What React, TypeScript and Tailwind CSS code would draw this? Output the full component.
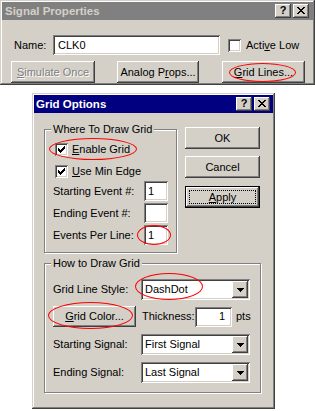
import React from "react";

const RAISED =
  "shadow-[inset_-1px_-1px_#404040,inset_1px_1px_#ffffff,inset_-2px_-2px_#808080,inset_2px_2px_#d4d0c8]";

function CloseGlyph() {
  const rows: [number, number][][] = [
    [[0, 2], [6, 2]],
    [[1, 2], [5, 2]],
    [[2, 4]],
    [[3, 2]],
    [[2, 4]],
    [[1, 2], [5, 2]],
    [[0, 2], [6, 2]],
  ];
  return (
    <svg width="8" height="7" viewBox="0 0 8 7" shapeRendering="crispEdges">
      {rows.map((segs, y) =>
        segs.map(([x, w], i) => <rect key={y + "-" + i} x={x} y={y} width={w} height={1} fill="#000" />)
      )}
    </svg>
  );
}

function TitleButtons() {
  return (
    <div className="flex items-center">
      <div className={`w-[16px] h-[14px] bg-[#d4d0c8] ${RAISED} flex items-center justify-center font-bold text-[11px] leading-[11px] text-black pb-[1px]`}>
        ?
      </div>
      <div className={`ml-[2px] w-[16px] h-[14px] bg-[#d4d0c8] ${RAISED} flex items-center justify-center pb-[1px]`}>
        <CloseGlyph />
      </div>
    </div>
  );
}

function Check() {
  const tops = [2, 3, 4, 3, 2, 1, 0];
  return (
    <svg width="13" height="13" viewBox="0 0 13 13" shapeRendering="crispEdges" className="absolute left-0 top-0">
      {tops.map((t, i) => (
        <rect key={i} x={3 + i} y={3 + t} width={1} height={3} fill="#000" />
      ))}
    </svg>
  );
}

function Checkbox({ checked }: { checked?: boolean }) {
  return (
    <div className="relative w-[13px] h-[13px] shrink-0 bg-white shadow-[inset_1px_1px_#808080,inset_-1px_-1px_#ffffff,inset_2px_2px_#404040,inset_-2px_-2px_#d4d0c8]">
      {checked && <Check />}
    </div>
  );
}

const SUNKEN =
  "bg-white shadow-[inset_1px_1px_#808080,inset_-1px_-1px_#ffffff,inset_2px_2px_#404040,inset_-2px_-2px_#d4d0c8]";

function Arrow() {
  return (
    <svg width="7" height="4" viewBox="0 0 7 4" shapeRendering="crispEdges">
      <rect x="0" y="0" width="7" height="1" fill="#000" />
      <rect x="1" y="1" width="5" height="1" fill="#000" />
      <rect x="2" y="2" width="3" height="1" fill="#000" />
      <rect x="3" y="3" width="1" height="1" fill="#000" />
    </svg>
  );
}

function Combo({ value }: { value: string }) {
  return (
    <div className={`w-[109px] h-[21px] ${SUNKEN} flex items-center p-[2px]`}>
      <div className="flex-1 pl-[2px]">{value}</div>
      <div className={`w-[16px] h-[17px] bg-[#d4d0c8] ${RAISED} flex items-center justify-center`}>
        <Arrow />
      </div>
    </div>
  );
}

function Ellipse({ className }: { className: string }) {
  return <div className={`absolute border border-[#ff0000] rounded-[50%] pointer-events-none ${className}`} />;
}

function Btn({ className, children }: { className: string; children: React.ReactNode }) {
  return (
    <div className={`relative bg-[#d4d0c8] ${RAISED} flex items-center justify-center ${className}`}>{children}</div>
  );
}

export default function App() {
  return (
    <div className="relative w-[315px] h-[411px] bg-white overflow-hidden font-['Liberation_Sans',Arial,sans-serif] text-[11px] leading-[13px] text-black">
      {/* Signal Properties window */}
      <div className="absolute left-0 top-0 w-[315px] h-[85px] bg-[#d4d0c8] p-[2px] flex flex-col shadow-[inset_-1px_-1px_#404040,inset_1px_1px_#d4d0c8,inset_-2px_-2px_#808080,inset_2px_2px_#ffffff]">
        <div className="h-[18px] bg-[#808080] flex items-center pl-[3px] pr-[4px]">
          <span className="font-bold text-[11.5px] text-[#d4d0c8]">Signal Properties</span>
          <div className="ml-auto">
            <TitleButtons />
          </div>
        </div>
        <div className="mt-[15px] h-[20px] flex items-center pl-[12px]">
          <span className="w-[39px]">Name:</span>
          <div className={`w-[167px] h-[20px] ${SUNKEN} flex items-center pl-[5px]`}>CLK0</div>
          <div className="ml-[8px]">
            <Checkbox />
          </div>
          <span className="ml-[5px]">
            Acti<u>v</u>e Low
          </span>
        </div>
        <div className="mt-[6px] flex pl-[9px]">
          <Btn className="w-[84px] h-[22px]">
            <span className="text-[#808080] [text-shadow:1px_1px_0_#ffffff]">
              <u>S</u>imulate Once
            </span>
          </Btn>
          <Btn className="ml-[22px] w-[82px] h-[22px]">
            <span>
              Analog P<u>r</u>ops...
            </span>
          </Btn>
          <Btn className="ml-[23px] w-[83px] h-[22px]">
            <span>
              <u>G</u>rid Lines...
            </span>
            <Ellipse className="left-[7px] top-[2px] w-[67px] h-[19px]" />
          </Btn>
        </div>
      </div>

      {/* Grid Options dialog */}
      <div className="absolute left-[32px] top-[93px] w-[243px] h-[316px] bg-[#d4d0c8] p-[2px] flex flex-col shadow-[inset_-1px_-1px_#404040,inset_1px_1px_#d4d0c8,inset_-2px_-2px_#808080,inset_2px_2px_#ffffff]">
        <div className="h-[18px] bg-[#000080] flex items-center pl-[2px] pr-[3px]">
          <span className="font-bold text-[11.5px] text-white">Grid Options</span>
          <div className="ml-auto">
            <TitleButtons />
          </div>
        </div>

        <div className="flex flex-col pl-[10px]">
          <div className="flex items-start">
            {/* Group 1 */}
            <div className="relative mt-[16px] w-[133px] h-[124px] border border-[#808080] shadow-[1px_1px_0_#ffffff,inset_1px_1px_0_#ffffff]">
              <span className="absolute left-[6px] top-[-7px] bg-[#d4d0c8] px-[2px] leading-[13px]">Where To Draw Grid</span>
              <div className="flex flex-col pt-[13px]">
                <div className="relative flex items-center h-[13px] ml-[10px]">
                  <Checkbox checked />
                  <span className="ml-[4px]">
                    <u>E</u>nable Grid
                  </span>
                  <Ellipse className="left-[-6px] top-[-5px] w-[88px] h-[22px]" />
                </div>
                <div className="flex items-center h-[13px] ml-[10px] mt-[9px]">
                  <Checkbox checked />
                  <span className="ml-[4px]">
                    <u>U</u>se Min Edge
                  </span>
                </div>
                <div className="flex items-center h-[20px] mt-[3px] ml-[8px]">
                  <span className="w-[91px]">Starting Event #:</span>
                  <div className={`w-[24px] h-[20px] ${SUNKEN} flex items-center pl-[4px]`}>1</div>
                </div>
                <div className="flex items-center h-[20px] mt-[2px] ml-[8px]">
                  <span className="w-[91px]">Ending Event #:</span>
                  <div className={`w-[24px] h-[20px] ${SUNKEN}`} />
                </div>
                <div className="flex items-center h-[20px] mt-[2px] ml-[8px]">
                  <span className="w-[91px]">Events Per Line:</span>
                  <div className={`relative w-[24px] h-[20px] ${SUNKEN} flex items-center pl-[4px]`}>
                    1
                    <Ellipse className="left-[-7px] top-0 w-[34px] h-[20px]" />
                  </div>
                </div>
              </div>
            </div>

            {/* Buttons */}
            <div className="ml-[8px] mt-[14px] flex flex-col">
              <Btn className="w-[75px] h-[22px]">OK</Btn>
              <Btn className="mt-[7px] w-[75px] h-[22px]">Cancel</Btn>
              <div className="mt-[8px] w-[75px] h-[22px] border border-black flex">
                <div className={`relative flex-1 bg-[#d4d0c8] ${RAISED} flex items-center justify-center`}>
                  <span>
                    <u>A</u>pply
                  </span>
                  <div className="absolute left-[3px] top-[3px] right-[3px] bottom-[3px] border border-dotted border-black" />
                </div>
              </div>
            </div>
          </div>

          {/* Group 2 */}
          <div className="relative mt-[10px] w-[217px] h-[130px] border border-[#808080] shadow-[1px_1px_0_#ffffff,inset_1px_1px_0_#ffffff]">
            <span className="absolute left-[6px] top-[-7px] bg-[#d4d0c8] px-[2px] leading-[13px]">How to Draw Grid</span>
            <div className="flex flex-col pt-[15px]">
              <div className="flex items-center h-[21px] ml-[8px]">
                <span className="w-[88px]">Grid Line Style:</span>
                <div className="relative">
                  <Combo value="DashDot" />
                  <Ellipse className="left-[-6px] top-[-6px] w-[68px] h-[27px]" />
                </div>
              </div>
              <div className="flex items-center h-[21px] mt-[6px] ml-[8px]">
                <Btn className="w-[83px] h-[21px]">
                  <span>
                    <u>G</u>rid Color...
                  </span>
                  <Ellipse className="left-[-5px] top-[-4px] w-[85px] h-[27px]" />
                </Btn>
                <span className="ml-[6px] w-[53px]">Thickness:</span>
                <div className={`w-[37px] h-[20px] ${SUNKEN} flex items-center justify-end pr-[7px]`}>1</div>
                <span className="ml-[4px]">pts</span>
              </div>
              <div className="flex items-center h-[21px] mt-[7px] ml-[8px]">
                <span className="w-[88px]">Starting Signal:</span>
                <Combo value="First Signal" />
              </div>
              <div className="flex items-center h-[21px] mt-[7px] ml-[8px]">
                <span className="w-[88px]">Ending Signal:</span>
                <Combo value="Last Signal" />
              </div>
            </div>
          </div>
        </div>
      </div>
    </div>
  );
}
